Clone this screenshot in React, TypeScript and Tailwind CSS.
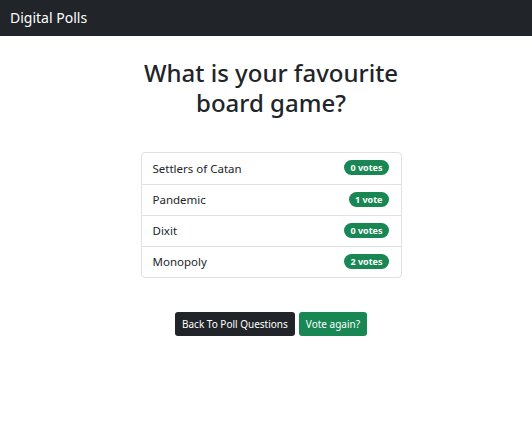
import React from 'react';

const App = () => {
  const options = [
    { id: 1, name: 'Settlers of Catan', votes: 0 },
    { id: 2, name: 'Pandemic', votes: 1 },
    { id: 3, name: 'Dixit', votes: 0 },
    { id: 4, name: 'Monopoly', votes: 2 },
  ];

  return (
    <div className="min-h-[432px] bg-white text-[#212529] font-['Noto_Sans',sans-serif]">
      {/* Navbar */}
      <nav className="h-[36px] bg-[#212529] flex items-center px-[10px]">
        <span className="text-white text-[14px] leading-none">Digital Polls</span>
      </nav>

      {/* Poll results */}
      <main className="flex flex-col items-center pl-[10px] pt-[22px]">
        <h2 className="text-[24px] leading-[30px] font-medium text-center">
          What is your favourite
          <br />
          board game?
        </h2>

        <ul className="mt-[34px] w-[261px] border border-[#dee2e6] rounded-[4px]">
          {options.map((opt, i) => (
            <li
              key={opt.id}
              className={`h-[31px] flex items-center justify-between pl-[11px] pr-[12px] text-[11.5px] ${
                i > 0 ? 'border-t border-[#dee2e6]' : ''
              }`}
            >
              <span>{opt.name}</span>
              <span className="bg-[#198754] text-white text-[9px] font-bold leading-none px-[6px] py-[3px] rounded-full -mt-[2px]">
                {opt.votes} {opt.votes === 1 ? 'vote' : 'votes'}
              </span>
            </li>
          ))}
        </ul>

        <div className="mt-[34px] flex gap-[4px]">
          <button className="h-[24px] px-[7px] bg-[#212529] text-white text-[10px] rounded-[3px]">
            Back To Poll Questions
          </button>
          <button className="h-[24px] px-[7px] bg-[#198754] text-white text-[10px] rounded-[3px]">
            Vote again?
          </button>
        </div>
      </main>
    </div>
  );
};

export default App;
